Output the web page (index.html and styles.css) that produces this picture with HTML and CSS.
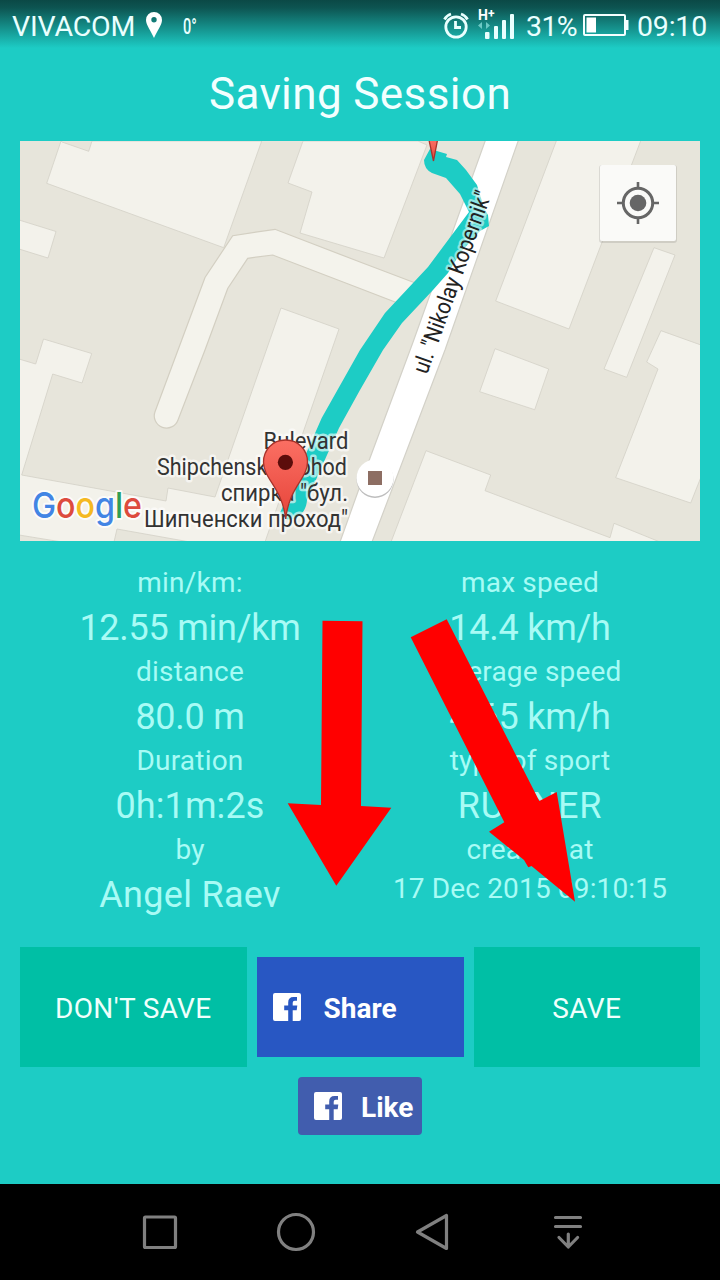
FILE: index.html
```html
<!DOCTYPE html>
<html lang="en">
<head>
<meta charset="utf-8">
<title>Saving Session</title>
<link rel="stylesheet" href="styles.css">
</head>
<body>
<div class="screen">
  <header class="status">
    <span class="carrier">VIVACOM</span>
    <svg class="pin-icon" width="16" height="26" viewBox="0 0 16 26"><path fill-rule="evenodd" d="M8 0a8 8 0 0 0-8 8c0 5 5 11 8 18 3-7 8-13 8-18a8 8 0 0 0-8-8zm0 5a2.700 2.700 0 1 1 0 5.400A2.700 2.700 0 0 1 8 5z" fill="#fff"/></svg>
    <span class="temp">0°</span>
    <svg class="status-icons" width="74" height="34" viewBox="443 6 74 34">
      <g fill="none" stroke="#e9fffe" stroke-width="2.8">
        <circle cx="456" cy="26" r="10.2"/>
        <path d="M455.500 20v6.500h5.500M444.500 18.500q2-4 6.500-5.500M467.500 18.500q-2-4-6.500-5.500"/>
      </g>
      <text class="net" x="478" y="19">H</text><text class="net-plus" x="488" y="17">+</text>
      <path d="M478 24.500l4-3.500v7zM490 24.500l-4-3.500v7z" fill="#6cc9c5"/>
      <g fill="#e9fffe"><rect x="485" y="31" width="4.500" height="7" rx="1"/><rect x="494" y="25" width="4" height="13" rx="1"/><rect x="502" y="19" width="4" height="19" rx="1"/><rect x="510" y="13" width="4" height="25" rx="1"/></g>
    </svg>
    <span class="percent">31%</span>
    <svg class="battery" width="46" height="24" viewBox="0 0 46 24"><rect x="1" y="2" width="41" height="20" rx="1" fill="none" stroke="#f4ffff" stroke-width="2"/><rect x="3.500" y="4.500" width="9.500" height="15" fill="#fff"/><rect x="43" y="7" width="2.500" height="10" fill="#f4ffff"/></svg>
    <span class="clock">09:10</span>
  </header>

  <h1 class="title">Saving Session</h1>

  <svg class="map" width="680" height="400" viewBox="20 141 680 400">
    <defs>
      <linearGradient id="pinFill" x1="0" y1="0" x2="0" y2="1"><stop offset="0" stop-color="#fb6f63"/><stop offset="1" stop-color="#e6443a"/></linearGradient>
    </defs>
    <rect x="20" y="141" width="680" height="400" fill="#e7e5db"/>
    <g class="buildings">
      <path d="M61 141L46.700 183.300 223.700 247.700 261.700 141H92L88.700 151.300 62 142z"/>
      <path d="M303 141L288 183 312 192 300 233 384 258 427 145 418 141z"/>
      <path d="M19 220L56 231.500 48 258 19 249z"/>
      <path d="M19 359L35.700 364 43.500 339 91.700 353.500 82 383 52.700 374 21.700 475 166 501 168 488 215 497 281 308 339 329 265 542H190L117 529 114 542H62L19 535z"/>
      <path d="M556.700 140L495.700 301 569 329 641 140z"/>
      <path d="M654 247.700L675 255 626.700 377.300 604 369z"/>
      <path d="M661 330.700L701 345V477L690.700 503 615.700 477.700 658 369 646.700 362z"/>
      <path d="M495 348.700L548.700 369 534.700 409.700 479.700 391.700z"/>
      <path d="M426 450.700L490.700 475 485 490.700 610 537.700 614 523.300 660 542H391z"/>
    </g>
    <path class="lane" d="M155 411.700L178 350 205 277.500 232.700 235.700 275 229.300 360 262 418 284 408 307 360 288.500 272.700 255 247.700 258.300 227.700 288.500 205 350 178 420A12 12 0 0 1 155 411.700z"/>
    <path class="street" d="M485.500 140L412.700 343 370 458 340 542H372L445 350 518.500 140z"/>
    <path class="route" d="M430 149L447 154 446 157 457 160 466 170 477 185 484 208 488 215 489 226 480 231 461 252 448 273 433 290 402 323 383 350 360 390 339 428 307 500C306 520 283 525 280 513L321.700 418 360 350 385 313 428 267 469 212 460 194 446 178 432 173Q424 169 424 160Z"/>
    <circle cx="375" cy="479.500" r="18.500" fill="#bdbdbd"/><circle cx="375" cy="478" r="18.500" fill="#fff"/><rect x="368" y="471" width="14" height="14" fill="#8d6e63"/>
    <text class="street-name" transform="translate(427 375) rotate(-70.300)" textLength="192" lengthAdjust="spacingAndGlyphs">ul. "Nikolay Kopernik"</text>
    <g class="stop-name">
      <text x="263.500" y="449" textLength="85" lengthAdjust="spacingAndGlyphs">Bulevard</text>
      <text x="157" y="475" textLength="190" lengthAdjust="spacingAndGlyphs">Shipchenski Prohod</text>
      <text x="221" y="501" textLength="127" lengthAdjust="spacingAndGlyphs">спирка "бул.</text>
      <text x="144" y="527" textLength="204" lengthAdjust="spacingAndGlyphs">Шипченски проход"</text>
    </g>
    <path class="pin" d="M429 140h8.500L433.500 161z"/>
    <path class="pin" d="M285.500 440C272 440 263.500 450.500 263.500 462 263.500 479 282 487 285.700 519 289 487 307.500 479 307.500 462 307.500 450.500 299 440 285.500 440z"/>
    <circle cx="285.400" cy="462.300" r="7.600" fill="#5c0d0b"/>
    <text class="google" x="32" y="518" textLength="110" lengthAdjust="spacingAndGlyphs"><tspan fill="#4285e4">G</tspan><tspan fill="#dd4b3e">o</tspan><tspan fill="#f5b921">o</tspan><tspan fill="#4285e4">g</tspan><tspan fill="#2f9e55">l</tspan><tspan fill="#dd4b3e">e</tspan></text>
    <rect x="599" y="165" width="78" height="78" rx="3" fill="#000" opacity=".1"/>
    <rect x="600" y="165" width="76" height="76" rx="2" fill="#fafaf8"/>
    <circle cx="638" cy="203" r="14.700" fill="none" stroke="#666" stroke-width="3"/><circle cx="638" cy="203" r="8.300" fill="#666"/>
    <path d="M638 182v6M638 218v6M617 203h6M653 203h6" stroke="#666" stroke-width="2.600"/>
  </svg>

  <section class="stats">
    <dl class="column">
      <dt>min/km:</dt><dd>12.55 min/km</dd>
      <dt>distance</dt><dd>80.0 m</dd>
      <dt>Duration</dt><dd class="duration">0h:1m:2s</dd>
      <dt>by</dt><dd class="name">Angel Raev</dd>
    </dl>
    <dl class="column">
      <dt>max speed</dt><dd>14.4 km/h</dd>
      <dt>average speed</dt><dd>4.65 km/h</dd>
      <dt>type of sport</dt><dd class="sport">RUNNER</dd>
      <dt>created at</dt><dd class="date">17 Dec 2015 09:10:15</dd>
    </dl>
  </section>

  <div class="actions">
    <button class="action">DON'T SAVE</button>
    <button class="share"><svg width="28" height="28" viewBox="0 0 28 28"><path fill="#fff" d="M2 0h24a2 2 0 0 1 2 2v24a2 2 0 0 1-2 2h-6.300V17.200h4l.6-4.800h-4.600v-2.600q0-2 2-2H24V4h-3.500Q15.200 4 15.200 9.500v2.900h-4v4.800h4V28H2a2 2 0 0 1-2-2V2a2 2 0 0 1 2-2z"/></svg><span>Share</span></button>
    <button class="action">SAVE</button>
  </div>
  <div class="like-row">
    <button class="like"><svg width="28" height="28" viewBox="0 0 28 28"><path fill="#fff" d="M2 0h24a2 2 0 0 1 2 2v24a2 2 0 0 1-2 2h-6.300V17.200h4l.6-4.800h-4.600v-2.600q0-2 2-2H24V4h-3.500Q15.200 4 15.200 9.500v2.900h-4v4.800h4V28H2a2 2 0 0 1-2-2V2a2 2 0 0 1 2-2z"/></svg><span>Like</span></button>
  </div>

  <nav class="navbar">
    <svg width="720" height="96" viewBox="0 1184 720 96" fill="none" stroke="#808080" stroke-width="3.200" stroke-linejoin="round" stroke-linecap="round">
      <rect x="144.500" y="1217" width="31" height="30.500" rx="1"/>
      <circle cx="296" cy="1232" r="17.500"/>
      <path d="M446.500 1215.500V1248.500L417.500 1232z"/>
      <path d="M555.500 1217.500h25M555.500 1226.500h25M568.300 1234v13M559 1237.500l9.300 9.500 9.300-9.500"/>
    </svg>
  </nav>

  <svg class="arrows" width="720" height="1280" viewBox="0 0 720 1280" fill="#f00">
    <path d="M322.500 620.700L362.500 621.300 361 806 391.300 807.700 336.300 885.700 287.700 803.300 321 805z"/>
    <path d="M446.700 619.300L539.300 801 556.700 792 575 901.700 531.500 866 528.300 867.300 524 860 489 831.700 504.300 822.300 410.700 637.300z"/>
  </svg>
</div>
</body>
</html>
```
FILE: styles.css
```css
* { box-sizing: border-box; }
body { margin: 0; font-family: Roboto, sans-serif; background: #1dccc5; }
.screen { position: relative; width: 720px; height: 1280px; display: flex; flex-direction: column; overflow: hidden; background: #1dccc5; }
.status { height: 50px; padding: 3px 12px 0; display: flex; align-items: center; color: #e9fffe; font-size: 29px; line-height: 48px; background: linear-gradient(#0b4946 0, #0d5552 8px, #1dccc5 48px); }
.carrier { width: 122px; font-size: 28.500px; letter-spacing: -.2px; white-space: nowrap; }
.pin-icon { margin-left: 12px; margin-top: -3px; }
.temp { margin-left: 21px; width: 20px; font-size: 22px; font-weight: 500; transform: scaleX(.66); transform-origin: left; }
.status-icons { margin-left: 240px; flex: none; margin-top: -6px; }
.net { font: bold 14px Roboto, sans-serif; fill: #fff; }
.net-plus { font: bold 12px Roboto, sans-serif; fill: #fff; }
.percent { margin-left: 9px; width: 53px; font-size: 28.500px; letter-spacing: -.6px; white-space: nowrap; }
.battery { margin-left: 4px; flex: none; margin-top: -4px; }
.clock { margin-left: 8px; font-size: 28.500px; letter-spacing: -.2px; }
.title { margin: 0; height: 91px; padding-top: 18px; text-align: center; font-size: 44px; font-weight: 400; line-height: 52px; letter-spacing: .4px; color: #f2ffff; }
.map { display: block; margin: 0 20px; flex: none; }
.buildings path { fill: #f3f2eb; stroke: #d3d1c7; stroke-width: .8; }
.lane { fill: #f4f3ec; stroke: #d3cfc2; stroke-width: 1.200; }
.street { fill: #fff; stroke: #d3d1c8; stroke-width: 1.200; }
.route { fill: #1dccc5; }
.street-name, .stop-name text { font: 23px Roboto, sans-serif; fill: #333; stroke: #fff; stroke-opacity: .6; stroke-width: 5px; stroke-linejoin: round; paint-order: stroke; }
.street-name { fill: #222; stroke-opacity: .5; }
.pin { fill: url(#pinFill); stroke: #a8332b; stroke-width: 1.300; }
.google { font: 500 36px Inter, sans-serif; stroke: #fff; stroke-opacity: .8; stroke-width: 4px; stroke-linejoin: round; paint-order: stroke; }
.stats { margin: 22px 20px 0; height: 384px; display: grid; grid-template-columns: 340px 340px; }
.column { margin: 0; text-align: center; color: #a8fbf5; white-space: nowrap; }
.column dt { height: 40px; line-height: 40px; font-size: 28px; letter-spacing: .2px; }
.column dd { margin: 0; height: 49px; line-height: 50px; font-size: 36px; letter-spacing: -.25px; }
.column .duration { letter-spacing: .1px; }
.column .name { letter-spacing: .3px; }
.column .sport { letter-spacing: .8px; }
.column .date { line-height: 37px; font-size: 28px; letter-spacing: .15px; }
.actions { margin: 0 20px; height: 120px; display: flex; align-items: center; gap: 10px; }
button { margin: 0; border: 0; color: #fff; font-family: Roboto, sans-serif; display: flex; align-items: center; white-space: nowrap; }
.action { flex: 1; height: 120px; justify-content: center; padding: 3px 0 0; background: #00bfa5; color: #effffc; font-size: 28px; letter-spacing: .35px; }
.share { width: 207px; height: 100px; padding: 0 16px; gap: 23px; background: #2857c3; font-size: 28px; font-weight: 700; }
.share span, .like span { padding-top: 3px; }
.like-row { display: flex; justify-content: center; margin-top: 10px; }
.like { width: 124px; height: 58px; padding: 0 0 0 16px; gap: 19px; border-radius: 4px; background: #415dae; font-size: 28px; font-weight: 700; }
.navbar { margin-top: auto; height: 96px; background: #000; }
.navbar svg { display: block; }
.arrows { position: absolute; inset: 0; pointer-events: none; }
```
